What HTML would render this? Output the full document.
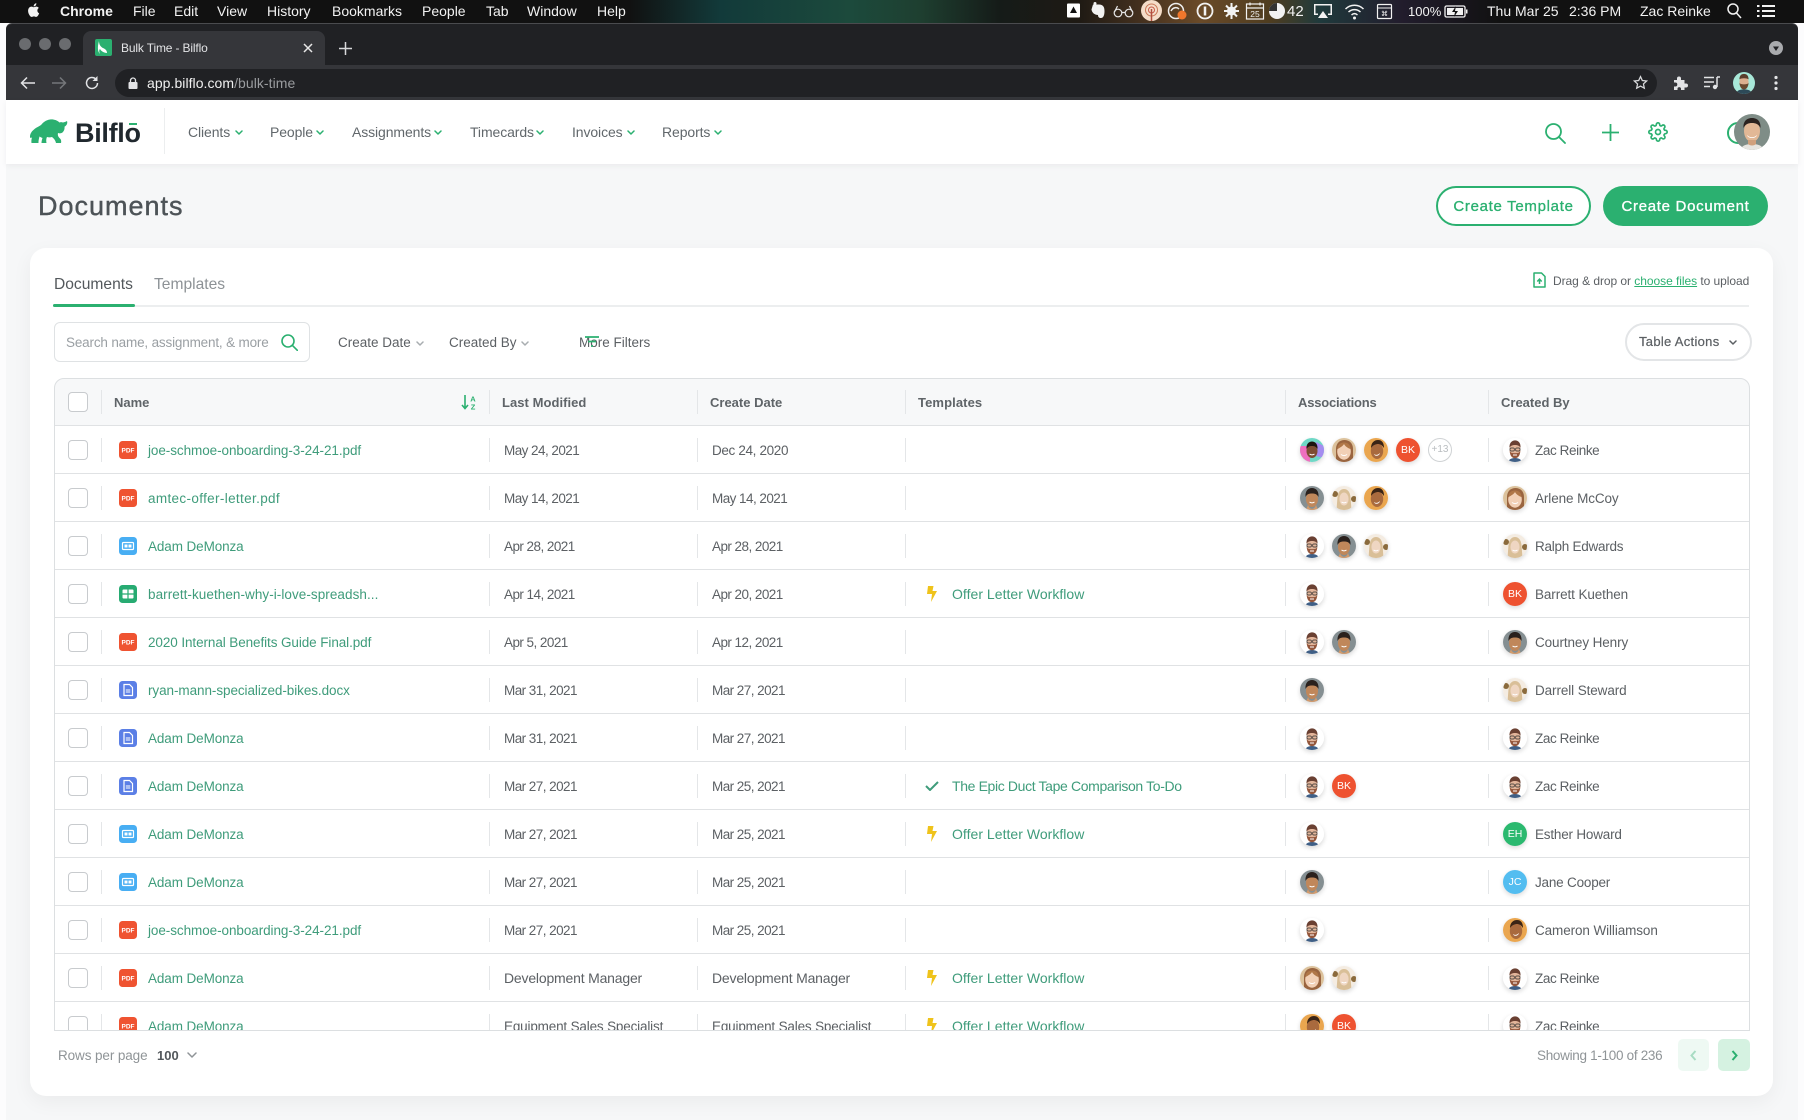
<!DOCTYPE html>
<html><head><meta charset="utf-8"><title>Bulk Time - Bilflo</title>
<style>
*{box-sizing:border-box}
html,body{margin:0;padding:0}
body{width:1804px;height:1120px;position:relative;overflow:hidden;background:#fcfcfd;font-family:"Liberation Sans",sans-serif;color:#5c6064;font-size:13.5px}
.abs,.t,svg.p,i.b{position:absolute}
.t{white-space:nowrap}
#mb{position:absolute;left:0;top:0;width:1804px;height:23px;background:linear-gradient(90deg,#111 0,#111 630px,#123a3a 720px,#1c4a3c 850px,#1e3f30 920px,#151b18 1000px,#1f1a14 1080px,#4a3420 1150px,#6a4a28 1200px,#4f3d20 1270px,#1f3a3c 1320px,#221d2d 1400px,#111 1500px)}
#mb .t{top:0;line-height:22px;font-size:14px;color:#f2f2f2}
#tabs{position:absolute;left:6px;top:23px;width:1792px;height:42px;background:#202124;border-radius:6px 6px 0 0;border-top:1px solid #4a4b4e}
#tool{position:absolute;left:6px;top:65px;width:1792px;height:35px;background:#35363a}
#omni{position:absolute;left:115px;top:69px;width:1542px;height:28px;background:#202124;border-radius:14px}
.lt{width:12px;height:12px;border-radius:50%;background:#6a6c6f;position:absolute;top:38px}
#tab{position:absolute;left:83px;top:31px;width:242px;height:34px;background:#35363a;border-radius:8px 8px 0 0}
#win{position:absolute;left:6px;top:100px;width:1792px;height:1020px;background:#f6f7f8}
#nav{position:absolute;left:6px;top:100px;width:1792px;height:64px;background:#fff;box-shadow:0 2px 6px rgba(0,0,0,.05)}
.nv{position:absolute;top:122px;line-height:20px;font-size:14px;color:#61676b;white-space:nowrap;letter-spacing:-.1px}
.ch{position:absolute;fill:none;stroke-width:1.5;stroke-linecap:round;stroke-linejoin:round}
#card{position:absolute;left:30px;top:248px;width:1743px;height:848px;background:#fff;border-radius:16px;box-shadow:0 6px 20px rgba(0,0,0,.05)}
.btn{position:absolute;top:186px;height:40px;border-radius:20px;font-size:15px;letter-spacing:.7px;line-height:38px;text-align:center;-webkit-text-stroke:.3px currentColor;white-space:nowrap}
.r{position:absolute;left:0;width:1804px;height:48px}
.r::before{content:"";position:absolute;left:0;top:12px;width:1804px;height:24px;background:linear-gradient(#e4e6e8,#e4e6e8) 101px 0/1px 100% no-repeat,linear-gradient(#e4e6e8,#e4e6e8) 489px 0/1px 100% no-repeat,linear-gradient(#e4e6e8,#e4e6e8) 697px 0/1px 100% no-repeat,linear-gradient(#e4e6e8,#e4e6e8) 905px 0/1px 100% no-repeat,linear-gradient(#e4e6e8,#e4e6e8) 1285px 0/1px 100% no-repeat,linear-gradient(#e4e6e8,#e4e6e8) 1488px 0/1px 100% no-repeat}
.r::after{content:"";position:absolute;left:55px;width:1694px;top:47px;height:1px;background:#e0e2e4}
.r .t{top:0;line-height:50px}
.r .t.k{line-height:48px}
.cb{position:absolute;left:68px;top:14px;width:20px;height:20px;border:1px solid #c8cbce;border-radius:4px;background:#fff}
.l{color:#3f9c7b}
.f{position:absolute;left:119px;top:15px;width:18px;height:18px}
.av{position:absolute;top:12px;width:24px;height:24px;border-radius:50%;overflow:hidden;box-shadow:0 2px 5px rgba(0,0,0,.16);background:#fff}
.ini{position:absolute;top:12px;width:24px;height:24px;border-radius:50%;color:#fff;font-size:10.5px;line-height:24px;text-align:center;box-shadow:0 2px 5px rgba(0,0,0,.14)}
.th{position:absolute;top:379px;line-height:48px;font-weight:700;font-size:13px;color:#5f6468;white-space:nowrap}
.bolt{position:absolute;left:927px;top:16px;width:10px;height:16px}
.d{left:504px;letter-spacing:-.55px}
.e{left:712px;letter-spacing:-.55px}
.z{letter-spacing:-.4px;left:1535px}
.n{left:1535px;letter-spacing:-.1px}
.ad{left:148px;letter-spacing:-.1px}
</style></head><body>

<svg width="0" height="0" style="position:absolute">
<defs>
<symbol id="zac" viewBox="0 0 24 24"><rect width="24" height="24" fill="#fff"/><path d="M5 24c1-3 4-4 7-4s6 1 7 4z" fill="#3f5f86"/><ellipse cx="12" cy="12" rx="5.400" ry="7.400" fill="#e3b59a"/><path d="M6.500 10c-.4-5 2.400-7.600 5.600-7.600S18 5 17.500 10c-1-2.400-3-3-5.500-3s-4.500.6-5.500 3z" fill="#6a4032"/><path d="M6.700 13c.3 5 2.500 7.200 5.300 7.200s5-2.200 5.300-7.200c-1 2-2.500 2.200-5.300 2.200S7.700 15 6.700 13z" fill="#94573c"/><rect x="7" y="10" width="4.300" height="3" rx="1" fill="none" stroke="#2d2d2d" stroke-width=".7"/><rect x="12.700" y="10" width="4.300" height="3" rx="1" fill="none" stroke="#2d2d2d" stroke-width=".7"/><path d="M10 17h4" stroke="#fff" stroke-width="1"/></symbol>
<symbol id="dark" viewBox="0 0 24 24"><rect width="24" height="24" fill="#858f92"/><ellipse cx="12" cy="13" rx="6" ry="8" fill="#c0875a"/><path d="M5.500 11C5 5 8 2 12 2s7 3 6.500 9c-1.500-3-3.500-3.500-6.500-3.500S7 8 5.500 11z" fill="#2a211d"/><path d="M8 19c1.500 5 6.500 5 8 0l2 5H6z" fill="#d29a6c"/><path d="M9.500 16c1.500 1 3.500 1 5 0" stroke="#fff" stroke-width="1" fill="none"/></symbol>
<symbol id="red" viewBox="0 0 24 24"><rect width="24" height="24" fill="#dcc29c"/><path d="M4 24V11C4 5 8 2 12.500 2S21 5 21 11v13z" fill="#9a6540"/><ellipse cx="12" cy="13.500" rx="6.800" ry="8.200" fill="#f2d0b6"/><path d="M5.500 11c2-1 5.500-3 6.500-5 1 2 3.500 4 6.500 5 0-4-2.500-6.500-6.500-6.500S5.500 7 5.500 11z" fill="#b07748"/><path d="M9 16.500c2 1.500 4 1.500 6 0" stroke="#fff" stroke-width="1" fill="none"/></symbol>
<symbol id="blonde" viewBox="0 0 24 24"><rect width="24" height="24" fill="#f4ece2"/><circle cx="3" cy="8" r="3" fill="#8a6a3c"/><circle cx="22" cy="13" r="3" fill="#8a6a3c"/><path d="M4.500 24l1-13c.5-5 3-8 6.500-8s6 3 6.500 8l1 13z" fill="#d9bf98"/><ellipse cx="12" cy="13" rx="4.600" ry="6.500" fill="#efd6c2"/><path d="M9.500 16c1.500 1 3.500 1 5 0" stroke="#fff" stroke-width="1" fill="none"/></symbol>
<symbol id="orange" viewBox="0 0 24 24"><rect width="24" height="24" fill="#eaa64f"/><ellipse cx="13" cy="13" rx="6.200" ry="8" fill="#a96a3e"/><path d="M7 10C7 5 10 2 14 2s6 3 6 8c-2-3-4-4-6-4s-5 1-7 4z" fill="#3a2416"/><path d="M10 16c2 1.500 4 1 6-1-.5 3-5 4-6 1z" fill="#fff"/></symbol>
<symbol id="multi" viewBox="0 0 24 24"><rect width="24" height="24" fill="#6fd8c6"/><path d="M0 8h10v16H0z" fill="#ef6fbf"/><path d="M16 4l8 4v12l-8-2z" fill="#a58df0"/><ellipse cx="12" cy="13" rx="5.500" ry="7" fill="#7d4d33"/><path d="M6.500 11C6 6 9 3.500 12 3.500S18 6 17.500 11c-1.500-2.500-3-3-5.500-3S8 8.500 6.500 11z" fill="#1d1410"/><path d="M9.500 16c1.500 1 3.500 1 5 0" stroke="#fff" stroke-width="1" fill="none"/></symbol>
<symbol id="pdf" viewBox="0 0 18 18"><rect width="18" height="18" rx="3.500" fill="#ef5331"/><text x="9" y="11.500" font-family="Liberation Sans" font-size="6.500" font-weight="700" fill="#fff" text-anchor="middle">PDF</text></symbol>
<symbol id="id" viewBox="0 0 18 18"><rect width="18" height="18" rx="3.500" fill="#48aef3"/><rect x="3.500" y="5.500" width="11" height="7" rx="1" fill="none" stroke="#fff" stroke-width="1.200"/><rect x="5.500" y="7.500" width="3" height="3" fill="#fff"/><rect x="9.500" y="7.500" width="3" height="3" fill="#fff"/></symbol>
<symbol id="sheet" viewBox="0 0 18 18"><rect width="18" height="18" rx="3.500" fill="#27ab72"/><rect x="3.500" y="4.500" width="11" height="9" rx="1" fill="#fff"/><path d="M9 4.500v9M3.500 9h11" stroke="#27ab72" stroke-width="1.200"/></symbol>
<symbol id="doc" viewBox="0 0 18 18"><rect width="18" height="18" rx="3.500" fill="#5b7fe6"/><path d="M5 3.500h5.500L13.500 6.500V14.500H5z" fill="none" stroke="#fff" stroke-width="1.200"/><path d="M6.800 9h4.500M6.800 11h4.500" stroke="#fff" stroke-width="1"/></symbol>
<symbol id="bolt" viewBox="0 0 10 16"><path d="M1 0h5.500L5.500 5H10L4 16l1-8H0z" fill="#efc31b"/></symbol>
<symbol id="chk" viewBox="0 0 14 10"><path d="M1 5l4 4 8-8" fill="none" stroke="#3f9c7b" stroke-width="2"/></symbol>
</defs>
</svg>

<!-- mac menu bar -->
<div id="mb">
<svg class="p" style="left:26px;top:2px" width="16" height="17" viewBox="0 0 24 24"><path fill="#f2f2f2" d="M17.050 12.040c-.03-2.580 2.110-3.820 2.200-3.880-1.200-1.750-3.070-1.990-3.740-2.020-1.590-.16-3.100.94-3.910.94-.8 0-2.050-.92-3.370-.89-1.740.03-3.340 1.010-4.230 2.560-1.800 3.130-.46 7.760 1.300 10.300.86 1.240 1.880 2.640 3.220 2.590 1.290-.05 1.780-.84 3.340-.84s2 .84 3.370.81c1.390-.02 2.270-1.260 3.120-2.510.98-1.440 1.390-2.830 1.410-2.900-.03-.01-2.710-1.040-2.710-4.160zM14.480 4.460c.71-.86 1.190-2.060 1.060-3.260-1.030.04-2.270.68-3.010 1.550-.66.76-1.240 1.980-1.080 3.150 1.150.09 2.320-.59 3.030-1.440z"/></svg>
<span class="t" style="left:60px;font-weight:700">Chrome</span>
<span class="t" style="left:133px">File</span>
<span class="t" style="left:174px">Edit</span>
<span class="t" style="left:217px">View</span>
<span class="t" style="left:267px">History</span>
<span class="t" style="left:332px">Bookmarks</span>
<span class="t" style="left:422px">People</span>
<span class="t" style="left:486px">Tab</span>
<span class="t" style="left:527px">Window</span>
<span class="t" style="left:597px">Help</span>

<svg class="p" style="left:0;top:0" width="1804" height="23" viewBox="0 0 1804 23">
<rect x="1067" y="3.500" width="13" height="14" rx="1" fill="#fff"/><path d="M1073.500 6.500l3.500 6.500h-7z" fill="#111"/>
<path d="M1093 4.500h6c4 0 5.500 2.500 5.500 6.500 0 5-1.500 7-3.500 7s-3-1-3-3c-3 0-6-2-6.500-5.500z" fill="#f2f2f2"/><circle cx="1095" cy="3.500" r="1.500" fill="#f2f2f2"/>
<g fill="none" stroke="#e8e8e8" stroke-width="1.200"><circle cx="1118" cy="13" r="3.800"/><circle cx="1129" cy="13" r="3.800"/><path d="M1121.800 12.500h3.400M1114.500 12l3-6M1132.500 12l-3-6"/></g>
<circle cx="1151.500" cy="10.500" r="10.500" fill="#f5ddc9"/><circle cx="1151.500" cy="10" r="6" fill="none" stroke="#c97a5a"/><circle cx="1151.500" cy="10" r="3" fill="none" stroke="#c95a4a"/><path d="M1151.500 9v12" stroke="#b0503f" stroke-width="1.500"/>
<g fill="none" stroke="#eee" stroke-width="1.500"><circle cx="1176" cy="11" r="7.500"/><path d="M1171 11c2-4 6-4 8-2"/></g><circle cx="1182" cy="15" r="4.500" fill="#f0772c"/>
<circle cx="1205" cy="11" r="7.500" fill="none" stroke="#f2f2f2" stroke-width="1.800"/><path d="M1205 6.500v9" stroke="#f2f2f2" stroke-width="2.500"/>
<circle cx="1231.500" cy="11" r="4.500" fill="#f2f2f2"/><g stroke="#f2f2f2" stroke-width="2"><path d="M1231.500 3v16M1224 11h15M1226 5.500l11 11M1237 5.500l-11 11"/></g>
<rect x="1246.500" y="4" width="17" height="15" fill="none" stroke="#f2f2f2" stroke-width="1.200"/><path d="M1246.500 8h17M1250 2.500v3M1260 2.500v3" stroke="#f2f2f2" stroke-width="1.200"/><text x="1255" y="17" font-family="Liberation Sans" font-size="8.500" fill="#f2f2f2" text-anchor="middle">25</text>
<circle cx="1277" cy="11" r="8" fill="#f2f2f2"/><path d="M1277 11V3a8 8 0 0 0-8 8z" fill="#333"/>
<path d="M1314 4h18v11h-4v-1.500h2.500v-8h-15v8h2.500V15h-4z" fill="#f2f2f2"/><path d="M1323 11l5 7h-10z" fill="#f2f2f2"/>
<g fill="none" stroke="#f2f2f2" stroke-width="1.500"><path d="M1345.500 9c5-5 13-5 18 0M1348.500 12c3.500-3.200 8.500-3.200 12 0M1351.500 15c2-1.800 4-1.800 6 0"/></g><circle cx="1354.500" cy="18" r="1.500" fill="#f2f2f2"/>
<rect x="1377.500" y="4.500" width="14" height="14" rx="1" fill="none" stroke="#f2f2f2" stroke-width="1.200"/><path d="M1378 8h13" stroke="#f2f2f2"/><text x="1384.500" y="16" font-family="Liberation Sans" font-size="7" fill="#f2f2f2" text-anchor="middle">⌘</text>
<rect x="1445" y="6" width="20" height="11" rx="1.500" fill="none" stroke="#f2f2f2" stroke-width="1.300"/><rect x="1447" y="8" width="16" height="7" fill="#f2f2f2"/><path d="M1456 6l-4 6h3l-1 5 4-6h-3z" fill="#111"/><rect x="1466" y="9.500" width="1.500" height="4" fill="#f2f2f2"/>
<circle cx="1733" cy="9" r="5" fill="none" stroke="#f2f2f2" stroke-width="1.500"/><path d="M1736.500 13l4.500 5" stroke="#f2f2f2" stroke-width="1.500"/>
<path d="M1762 6h13M1762 11h13M1762 16h13" stroke="#f2f2f2" stroke-width="2"/><path d="M1757 6h2.500M1757 11h2.500M1757 16h2.500" stroke="#f2f2f2" stroke-width="2"/>
</svg>
<span class="t" style="left:1287px;font-size:15px;line-height:23px">42</span>
<span class="t" style="left:1408px;font-size:13px;line-height:23px">100%</span>
<span class="t" style="left:1487px">Thu Mar 25</span>
<span class="t" style="left:1569px">2:36 PM</span>
<span class="t" style="left:1640px">Zac Reinke</span>
</div>

<!-- chrome -->
<div id="tabs"></div>
<i class="lt" style="left:19px"></i><i class="lt" style="left:39px"></i><i class="lt" style="left:59px"></i>
<div id="tab"></div>
<svg class="p" style="left:95px;top:39px" width="17" height="17" viewBox="0 0 17 17"><rect width="17" height="17" rx="2" fill="#2bb070"/><path d="M4 2c0 4 2 6 4 7 2 1 4 2 4 5-3 0-6-2-7-4-1 1-1 3 0 5-2-2-3-6-1-13z" fill="#fff"/></svg>
<span class="t" style="left:121px;top:40px;line-height:16px;font-size:12px;color:#e3e4e6;letter-spacing:-.15px">Bulk Time - Bilflo</span>
<svg class="p" style="left:303px;top:43px" width="10" height="10" viewBox="0 0 10 10"><path d="M1 1l8 8M9 1l-8 8" stroke="#e8e8e8" stroke-width="1.500"/></svg>
<svg class="p" style="left:339px;top:42px" width="13" height="13" viewBox="0 0 13 13"><path d="M6.500 0v13M0 6.500h13" stroke="#d8d9db" stroke-width="1.500"/></svg>
<svg class="p" style="left:1769px;top:41px" width="14" height="14" viewBox="0 0 14 14"><circle cx="7" cy="7" r="7" fill="#a9abae"/><path d="M4 5.500h6L7 10z" fill="#202124"/></svg>

<div id="tool"></div>
<div id="omni"></div>
<svg class="p" style="left:20px;top:76px" width="16" height="14" viewBox="0 0 16 14"><path d="M15 7H2M7 1.500L1.500 7 7 12.500" fill="none" stroke="#e3e4e6" stroke-width="1.500"/></svg>
<svg class="p" style="left:51px;top:76px" width="16" height="14" viewBox="0 0 16 14"><path d="M1 7h13M9 1.500L14.500 7 9 12.500" fill="none" stroke="#75777a" stroke-width="1.500"/></svg>
<svg class="p" style="left:84px;top:75px" width="16" height="16" viewBox="0 0 16 16"><path d="M13.500 8A5.500 5.500 0 1 1 11.800 4" fill="none" stroke="#e3e4e6" stroke-width="1.500"/><path d="M13.500 1v5h-5z" fill="#e3e4e6"/></svg>
<svg class="p" style="left:128px;top:77px" width="10" height="12" viewBox="0 0 10 12"><rect x=".5" y="5" width="9" height="7" rx="1" fill="#e3e4e6"/><path d="M2.500 5V3.500a2.500 2.500 0 0 1 5 0V5" fill="none" stroke="#e3e4e6" stroke-width="1.300"/></svg>
<span class="t" style="left:147px;top:74px;line-height:18px;font-size:14px;letter-spacing:.05px;color:#f0f0f0">app.bilflo.com<span style="color:#9a9c9f">/bulk-time</span></span>
<svg class="p" style="left:1633px;top:75px" width="15" height="15" viewBox="0 0 24 24"><path d="M12 2.500l2.900 6.300 6.900.8-5.100 4.700 1.400 6.800-6.100-3.400-6.100 3.400 1.400-6.800L2.200 9.600l6.900-.8z" fill="none" stroke="#d8d9db" stroke-width="2"/></svg>
<svg class="p" style="left:1673px;top:75px" width="15" height="15" viewBox="0 0 15 15"><path d="M1 5h3V3.500a2 2 0 0 1 4 0V5h3.500v3.500H13a2 2 0 0 1 0 4h-1.500V15H8v-1.500a1.800 1.800 0 0 0-3.500 0V15H1v-3.500h1.300a2 2 0 0 0 0-4H1z" fill="#e3e4e6"/></svg>
<svg class="p" style="left:1704px;top:76px" width="16" height="14" viewBox="0 0 16 14"><path d="M0 1.500h10M0 6h10M0 10.500h6" stroke="#e3e4e6" stroke-width="1.500"/><path d="M13 1v10" stroke="#e3e4e6" stroke-width="1.500"/><circle cx="11" cy="11" r="2.200" fill="#e3e4e6"/><path d="M13 1h3" stroke="#e3e4e6" stroke-width="1.500"/></svg>
<svg class="p" style="left:1733px;top:72px;border-radius:50%;overflow:hidden" width="22" height="22" viewBox="0 0 24 24"><rect width="24" height="24" fill="#a8e8d8"/><path d="M3 24c1-4 5-5 9-5s8 1 9 5z" fill="#2d4a58"/><ellipse cx="12" cy="11" rx="5" ry="7" fill="#dcb08f"/><path d="M7 8c0-4 2-6 5-6s5 2 5 6c-2-1.500-8-1.500-10 0z" fill="#5a3f2c"/><path d="M7 12c.5 5 2.500 7 5 7s4.500-2 5-7c-1.500 2-8.500 2-10 0z" fill="#6a4a30"/></svg>
<svg class="p" style="left:1774px;top:75px" width="4" height="16" viewBox="0 0 4 16"><circle cx="2" cy="2.500" r="1.600" fill="#e3e4e6"/><circle cx="2" cy="8" r="1.600" fill="#e3e4e6"/><circle cx="2" cy="13.500" r="1.600" fill="#e3e4e6"/></svg>

<!-- page -->
<div id="win"></div>
<div id="nav"></div>
<svg class="p" style="left:30px;top:119px" width="38" height="24" viewBox="0 0 38 24"><path d="M0 17c.5-3 2-5 4-6.500C6 8.500 9 7.500 11 6c2-2.500 5-5 9-5.500 3-.5 7 .5 9.500 3 1-.5 2-.5 3.500 0 1-.2 2.500-.6 4-1.500.8 2.200-.2 4.500-2.500 5.800.3 2-.3 4.200-2 5.700-1.500 1-3 1-4.500.5-.5 2 0 4 2 5.500 1 1 1.500 2.500 1 4.500h-5c-.5-2.500-2-4.500-4-6-1.500.5-3.500.5-5 0-.8 1.500-1 3.500-.5 6h-5c0-2 .5-3.500 1-5-1-.3-2-.8-3-1.500-.5 2-1.200 4.500-1 6.500H1.500c-.3-2 0-4 .5-5.500-1 .5-1.500.5-2 0z" fill="#2bb070"/></svg>
<span class="t" style="left:75px;top:115px;line-height:36px;font-size:27px;font-weight:700;color:#20282e;letter-spacing:-.3px">Bilflo</span>
<i class="b" style="left:129px;top:123px;width:8px;height:2px;background:#2bb070"></i>
<i class="b" style="left:164px;top:108px;width:1px;height:46px;background:#eceeef"></i>

<span class="nv" style="left:188px">Clients</span><svg class="ch" style="left:235px;top:130px;stroke:#2bb070" width="8" height="5" viewBox="0 0 8 5"><path d="M1 1l3 3 3-3"/></svg>
<span class="nv" style="left:270px">People</span><svg class="ch" style="left:316px;top:130px;stroke:#2bb070" width="8" height="5" viewBox="0 0 8 5"><path d="M1 1l3 3 3-3"/></svg>
<span class="nv" style="left:352px">Assignments</span><svg class="ch" style="left:434px;top:130px;stroke:#2bb070" width="8" height="5" viewBox="0 0 8 5"><path d="M1 1l3 3 3-3"/></svg>
<span class="nv" style="left:470px">Timecards</span><svg class="ch" style="left:536px;top:130px;stroke:#2bb070" width="8" height="5" viewBox="0 0 8 5"><path d="M1 1l3 3 3-3"/></svg>
<span class="nv" style="left:572px">Invoices</span><svg class="ch" style="left:627px;top:130px;stroke:#2bb070" width="8" height="5" viewBox="0 0 8 5"><path d="M1 1l3 3 3-3"/></svg>
<span class="nv" style="left:662px">Reports</span><svg class="ch" style="left:714px;top:130px;stroke:#2bb070" width="8" height="5" viewBox="0 0 8 5"><path d="M1 1l3 3 3-3"/></svg>

<svg class="p" style="left:1545px;top:123px" width="21" height="21" viewBox="0 0 21 21"><circle cx="8.500" cy="8.500" r="7.500" fill="none" stroke="#2bb070" stroke-width="1.800"/><path d="M14 14l6 6" stroke="#2bb070" stroke-width="1.800" stroke-linecap="round"/></svg>
<svg class="p" style="left:1602px;top:124px" width="17" height="17" viewBox="0 0 17 17"><path d="M8.500 0v17M0 8.500h17" stroke="#2bb070" stroke-width="1.800"/></svg>
<svg class="p" style="left:1648px;top:122px" width="20" height="20" viewBox="0 0 24 24" fill="none" stroke="#2bb070" stroke-width="2"><circle cx="12" cy="12" r="3"/><path d="M19.400 15a1.650 1.650 0 0 0 .33 1.820l.06.06a2 2 0 0 1 0 2.830 2 2 0 0 1-2.830 0l-.06-.06a1.650 1.650 0 0 0-1.820-.33 1.650 1.650 0 0 0-1 1.510V21a2 2 0 0 1-2 2 2 2 0 0 1-2-2v-.09A1.650 1.650 0 0 0 9 19.400a1.650 1.650 0 0 0-1.820.33l-.06.06a2 2 0 0 1-2.830 0 2 2 0 0 1 0-2.830l.06-.06a1.650 1.650 0 0 0 .33-1.820 1.650 1.650 0 0 0-1.510-1H3a2 2 0 0 1-2-2 2 2 0 0 1 2-2h.09A1.650 1.650 0 0 0 4.600 9a1.650 1.650 0 0 0-.33-1.820l-.06-.06a2 2 0 0 1 0-2.830 2 2 0 0 1 2.830 0l.06.06a1.650 1.650 0 0 0 1.820.33H9a1.650 1.650 0 0 0 1-1.510V3a2 2 0 0 1 2-2 2 2 0 0 1 2 2v.09a1.650 1.650 0 0 0 1 1.510 1.650 1.650 0 0 0 1.820-.33l.06-.06a2 2 0 0 1 2.830 0 2 2 0 0 1 0 2.830l-.06.06a1.650 1.650 0 0 0-.33 1.820V9a1.650 1.650 0 0 0 1.510 1H21a2 2 0 0 1 2 2 2 2 0 0 1-2 2h-.09a1.650 1.650 0 0 0-1.510 1z"/></svg>
<i class="b" style="left:1727px;top:122px;width:22px;height:22px;border:2px solid #2bb070;border-radius:50%"></i>
<svg class="p" style="left:1734px;top:114px;border-radius:50%;overflow:hidden" width="36" height="36" viewBox="0 0 36 36"><rect width="36" height="36" fill="#7f8d87"/><path d="M6 36c2-5 7-6 12-6s10 1 12 6z" fill="#e7e5e0"/><ellipse cx="18" cy="17" rx="8" ry="11" fill="#e2b896"/><path d="M9.500 14C9 7 13 4 18 4s9 3 8.500 10c-2-4-5-5-8.500-5s-6.500 1-8.500 5z" fill="#2b2320"/><path d="M13 21c3 3 7 3 10 0-1 4-9 4-10 0z" fill="#fff"/><path d="M14 30c2 2 6 2 8 0v-4h-8z" fill="#d0a07c"/></svg>

<span class="t" style="left:38px;top:190px;line-height:32px;font-size:27px;letter-spacing:1px;color:#4d5357;-webkit-text-stroke:.4px #4d5357">Documents</span>
<div class="btn" style="left:1436px;width:155px;background:#fff;border:2px solid #2bb070;color:#2bb070">Create Template</div>
<div class="btn" style="left:1603px;width:165px;background:#2bb070;color:#fff;line-height:42px">Create Document</div>

<div id="card"></div>

<span class="t" style="left:54px;top:273px;line-height:24px;font-size:15.600px;color:#53585c">Documents</span>
<span class="t" style="left:154px;top:273px;line-height:24px;font-size:15.600px;color:#8d9296">Templates</span>
<i class="b" style="left:53px;top:305px;width:1696px;height:2px;background:#eceeef"></i>
<i class="b" style="left:53px;top:304px;width:82px;height:3px;background:#2bb070;border-radius:2px"></i>

<svg class="p" style="left:1533px;top:272px" width="13" height="16" viewBox="0 0 13 16"><path d="M1 1h7.500L12 4.500V15H1z" fill="#fff" stroke="#2bb070" stroke-width="1.500" stroke-linejoin="round"/><path d="M6.500 12V7.500M4.300 9.500l2.200-2.400 2.200 2.400" stroke="#2bb070" stroke-width="1.500" fill="none"/></svg>
<span class="t" style="left:1553px;top:271px;line-height:20px;font-size:12px;color:#5c6064;letter-spacing:-.05px">Drag &amp; drop or <span style="color:#2bb070;text-decoration:underline">choose files</span> to upload</span>

<div class="abs" style="left:54px;top:322px;width:256px;height:40px;border:1px solid #dfe2e4;border-radius:6px;background:#fff"></div>
<span class="t" style="left:66px;top:333px;line-height:20px;font-size:13.500px;color:#9a9fa3;letter-spacing:-.17px">Search name, assignment, &amp; more</span>
<svg class="p" style="left:281px;top:334px" width="17" height="17" viewBox="0 0 17 17"><circle cx="7" cy="7" r="6" fill="none" stroke="#2bb070" stroke-width="1.600"/><path d="M11.300 11.300l5 5" stroke="#2bb070" stroke-width="1.600" stroke-linecap="round"/></svg>
<span class="t" style="left:338px;top:333px;line-height:20px;font-size:13.500px;color:#5c6064">Create Date</span>
<svg class="ch" style="left:416px;top:341px;stroke:#a8adb0" width="8" height="5" viewBox="0 0 8 5"><path d="M1 1l3 3 3-3"/></svg>
<span class="t" style="left:449px;top:333px;line-height:20px;font-size:13.500px;color:#5c6064">Created By</span>
<svg class="ch" style="left:521px;top:341px;stroke:#a8adb0" width="8" height="5" viewBox="0 0 8 5"><path d="M1 1l3 3 3-3"/></svg>
<span class="t" style="left:579px;top:333px;line-height:20px;font-size:13.500px;color:#5c6064">More Filters</span>
<svg class="p" style="left:585px;top:336px" width="14" height="12" viewBox="0 0 14 12"><path d="M0 1h14M3 5.500h8M6 10h2" stroke="#2bb070" stroke-width="1.700"/></svg>

<div class="abs" style="left:1625px;top:323px;width:127px;height:38px;border:2px solid #e3e5e7;border-radius:19px;background:#fff"></div>
<span class="t" style="left:1639px;top:332px;line-height:20px;font-size:13px;color:#5c6064;letter-spacing:.3px;-webkit-text-stroke:.2px #5c6064">Table Actions</span>
<svg class="ch" style="left:1729px;top:340px;stroke:#5c6064" width="8" height="5" viewBox="0 0 8 5"><path d="M1 1l3 3 3-3"/></svg>

<!-- table -->
<div class="abs" style="left:54px;top:378px;width:1696px;height:48px;background:#f7f8f9;border-radius:10px 10px 0 0"></div>
<div class="abs" style="left:55px;top:379px;width:1694px;height:651px;overflow:hidden">
<div class="abs" style="left:-55px;top:-379px;width:1804px;height:1120px">

<div class="r" style="top:378px"><i class="cb"></i></div>
<span class="th" style="left:114px">Name</span>
<svg class="p" style="left:461px;top:395px" width="16" height="15" viewBox="0 0 16 15"><path d="M4 0v13M1 10l3 3.500L7 10" fill="none" stroke="#2bb070" stroke-width="1.600"/><text x="12" y="6.500" font-family="Liberation Sans" font-size="7.500" font-weight="700" fill="#2bb070" text-anchor="middle">A</text><text x="12" y="14.500" font-family="Liberation Sans" font-size="7.500" font-weight="700" fill="#2bb070" text-anchor="middle">Z</text></svg>
<span class="th" style="left:502px;letter-spacing:.05px">Last Modified</span>
<span class="th" style="left:710px">Create Date</span>
<span class="th" style="left:918px;letter-spacing:.1px">Templates</span>
<span class="th" style="left:1298px;letter-spacing:-.2px">Associations</span>
<span class="th" style="left:1501px">Created By</span>

<div class="r" style="top:426px"><i class="cb"></i><svg class="f"><use href="#pdf"/></svg><a class="t l" style="left:148px;letter-spacing:-.07px">joe-schmoe-onboarding-3-24-21.pdf</a><span class="t d">May 24, 2021</span><span class="t e" style="letter-spacing:-.35px">Dec 24, 2020</span>
<svg class="av" style="left:1300px"><use href="#multi"/></svg><svg class="av" style="left:1332px"><use href="#red"/></svg><svg class="av" style="left:1364px"><use href="#orange"/></svg><div class="ini" style="left:1396px;background:#ee5230">BK</div><div class="ini" style="left:1428px;border:1px solid #cfd2d4;background:#fff;color:#b9bdc0;box-shadow:none;line-height:22px;font-size:10px">+13</div>
<svg class="av" style="left:1503px"><use href="#zac"/></svg><span class="t z">Zac Reinke</span></div>

<div class="r" style="top:474px"><i class="cb"></i><svg class="f"><use href="#pdf"/></svg><a class="t l" style="left:148px;letter-spacing:.35px">amtec-offer-letter.pdf</a><span class="t d">May 14, 2021</span><span class="t e">May 14, 2021</span>
<svg class="av" style="left:1300px"><use href="#dark"/></svg><svg class="av" style="left:1332px"><use href="#blonde"/></svg><svg class="av" style="left:1364px"><use href="#orange"/></svg>
<svg class="av" style="left:1503px"><use href="#red"/></svg><span class="t n">Arlene McCoy</span></div>

<div class="r" style="top:522px"><i class="cb"></i><svg class="f"><use href="#id"/></svg><a class="t l ad">Adam DeMonza</a><span class="t d">Apr 28, 2021</span><span class="t e">Apr 28, 2021</span>
<svg class="av" style="left:1300px"><use href="#zac"/></svg><svg class="av" style="left:1332px"><use href="#dark"/></svg><svg class="av" style="left:1364px"><use href="#blonde"/></svg>
<svg class="av" style="left:1503px"><use href="#blonde"/></svg><span class="t n" style="letter-spacing:-.25px">Ralph Edwards</span></div>

<div class="r" style="top:570px"><i class="cb"></i><svg class="f"><use href="#sheet"/></svg><a class="t l" style="left:148px;letter-spacing:.06px">barrett-kuethen-why-i-love-spreadsh...</a><span class="t d">Apr 14, 2021</span><span class="t e">Apr 20, 2021</span>
<svg class="bolt"><use href="#bolt"/></svg><a class="t l k" style="left:952px;font-size:14px;letter-spacing:.03px">Offer Letter Workflow</a>
<svg class="av" style="left:1300px"><use href="#zac"/></svg>
<div class="ini" style="left:1503px;background:#ee5230">BK</div><span class="t n">Barrett Kuethen</span></div>

<div class="r" style="top:618px"><i class="cb"></i><svg class="f"><use href="#pdf"/></svg><a class="t l" style="left:148px;letter-spacing:-.09px">2020 Internal Benefits Guide Final.pdf</a><span class="t d">Apr 5, 2021</span><span class="t e">Apr 12, 2021</span>
<svg class="av" style="left:1300px"><use href="#zac"/></svg><svg class="av" style="left:1332px"><use href="#dark"/></svg>
<svg class="av" style="left:1503px"><use href="#dark"/></svg><span class="t n">Courtney Henry</span></div>

<div class="r" style="top:666px"><i class="cb"></i><svg class="f"><use href="#doc"/></svg><a class="t l" style="left:148px;letter-spacing:-.07px">ryan-mann-specialized-bikes.docx</a><span class="t d">Mar 31, 2021</span><span class="t e">Mar 27, 2021</span>
<svg class="av" style="left:1300px"><use href="#dark"/></svg>
<svg class="av" style="left:1503px"><use href="#blonde"/></svg><span class="t n">Darrell Steward</span></div>

<div class="r" style="top:714px"><i class="cb"></i><svg class="f"><use href="#doc"/></svg><a class="t l ad">Adam DeMonza</a><span class="t d">Mar 31, 2021</span><span class="t e">Mar 27, 2021</span>
<svg class="av" style="left:1300px"><use href="#zac"/></svg>
<svg class="av" style="left:1503px"><use href="#zac"/></svg><span class="t z">Zac Reinke</span></div>

<div class="r" style="top:762px"><i class="cb"></i><svg class="f"><use href="#doc"/></svg><a class="t l ad">Adam DeMonza</a><span class="t d">Mar 27, 2021</span><span class="t e">Mar 25, 2021</span>
<svg class="p" style="left:925px;top:19px" width="14" height="10"><use href="#chk"/></svg><a class="t l k" style="left:952px;font-size:14px;letter-spacing:-.36px">The Epic Duct Tape Comparison To-Do</a>
<svg class="av" style="left:1300px"><use href="#zac"/></svg><div class="ini" style="left:1332px;background:#ee5230">BK</div>
<svg class="av" style="left:1503px"><use href="#zac"/></svg><span class="t z">Zac Reinke</span></div>

<div class="r" style="top:810px"><i class="cb"></i><svg class="f"><use href="#id"/></svg><a class="t l ad">Adam DeMonza</a><span class="t d">Mar 27, 2021</span><span class="t e">Mar 25, 2021</span>
<svg class="bolt"><use href="#bolt"/></svg><a class="t l k" style="left:952px;font-size:14px;letter-spacing:.03px">Offer Letter Workflow</a>
<svg class="av" style="left:1300px"><use href="#zac"/></svg>
<div class="ini" style="left:1503px;background:#2bb96f">EH</div><span class="t n" style="letter-spacing:-.2px">Esther Howard</span></div>

<div class="r" style="top:858px"><i class="cb"></i><svg class="f"><use href="#id"/></svg><a class="t l ad">Adam DeMonza</a><span class="t d">Mar 27, 2021</span><span class="t e">Mar 25, 2021</span>
<svg class="av" style="left:1300px"><use href="#dark"/></svg>
<div class="ini" style="left:1503px;background:#53bdf0">JC</div><span class="t n" style="letter-spacing:-.2px">Jane Cooper</span></div>

<div class="r" style="top:906px"><i class="cb"></i><svg class="f"><use href="#pdf"/></svg><a class="t l" style="left:148px;letter-spacing:-.07px">joe-schmoe-onboarding-3-24-21.pdf</a><span class="t d">Mar 27, 2021</span><span class="t e">Mar 25, 2021</span>
<svg class="av" style="left:1300px"><use href="#zac"/></svg>
<svg class="av" style="left:1503px"><use href="#orange"/></svg><span class="t n">Cameron Williamson</span></div>

<div class="r" style="top:954px"><i class="cb"></i><svg class="f"><use href="#pdf"/></svg><a class="t l ad">Adam DeMonza</a><span class="t k" style="left:504px;font-size:14px;letter-spacing:-.19px">Development Manager</span><span class="t k" style="left:712px;font-size:14px;letter-spacing:-.19px">Development Manager</span>
<svg class="bolt"><use href="#bolt"/></svg><a class="t l k" style="left:952px;font-size:14px;letter-spacing:.03px">Offer Letter Workflow</a>
<svg class="av" style="left:1300px"><use href="#red"/></svg><svg class="av" style="left:1332px"><use href="#blonde"/></svg>
<svg class="av" style="left:1503px"><use href="#zac"/></svg><span class="t z">Zac Reinke</span></div>

<div class="r" style="top:1002px"><i class="cb"></i><svg class="f"><use href="#pdf"/></svg><a class="t l ad">Adam DeMonza</a><span class="t" style="left:504px;letter-spacing:-.17px">Equipment Sales Specialist</span><span class="t" style="left:712px;letter-spacing:-.17px">Equipment Sales Specialist</span>
<svg class="bolt"><use href="#bolt"/></svg><a class="t l k" style="left:952px;font-size:14px;letter-spacing:.03px">Offer Letter Workflow</a>
<svg class="av" style="left:1300px"><use href="#orange"/></svg><div class="ini" style="left:1332px;background:#ee5230">BK</div>
<svg class="av" style="left:1503px"><use href="#zac"/></svg><span class="t z">Zac Reinke</span></div>

</div></div>
<div class="abs" style="left:54px;top:378px;width:1696px;height:653px;border:1px solid #dcdfe1;border-radius:10px 10px 0 0;pointer-events:none"></div>

<!-- footer -->
<span class="t" style="left:58px;top:1046px;line-height:20px;font-size:13.500px;color:#8f9497;letter-spacing:-.1px">Rows per page</span>
<span class="t" style="left:157px;top:1046px;line-height:20px;font-size:13px;font-weight:700;color:#53585c">100</span>
<svg class="ch" style="left:187px;top:1052px;stroke:#8f9497" width="10" height="6" viewBox="0 0 10 6"><path d="M1 1l4 4 4-4"/></svg>
<span class="t" style="left:1537px;top:1046px;line-height:20px;font-size:13.500px;color:#8f9497;letter-spacing:-.3px">Showing 1-100 of 236</span>
<div class="abs" style="left:1678px;top:1039px;width:31px;height:32px;background:#eef9f3;border-radius:5px"></div>
<div class="abs" style="left:1718px;top:1039px;width:32px;height:32px;background:#d5f2e1;border-radius:5px"></div>
<svg class="p" style="left:1690px;top:1050px" width="7" height="11" viewBox="0 0 7 11"><path d="M5.500 1L1.500 5.500 5.500 10" fill="none" stroke="#a8dcc3" stroke-width="2"/></svg>
<svg class="p" style="left:1731px;top:1050px" width="7" height="11" viewBox="0 0 7 11"><path d="M1.500 1L5.500 5.500 1.500 10" fill="none" stroke="#2bb070" stroke-width="2"/></svg>
</body></html>
